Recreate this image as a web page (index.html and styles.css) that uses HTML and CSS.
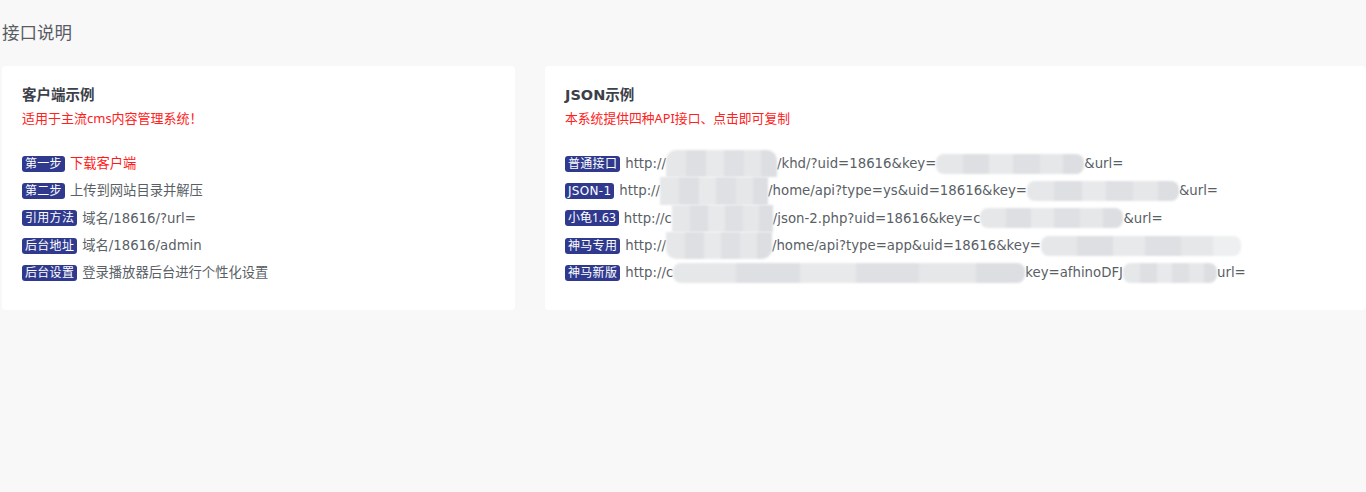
FILE: index.html
```html
<!DOCTYPE html>
<html lang="zh-CN">
<head>
<meta charset="utf-8">
<title>接口说明</title>
<link rel="stylesheet" href="styles.css">
</head>
<body>
<div class="page">
  <h1 class="page-title">接口说明</h1>
  <div class="cards">
    <div class="card">
      <h2 class="card-title">客户端示例</h2>
      <p class="card-sub">适用于主流cms内容管理系统！</p>
      <ul class="rows">
        <li><span class="badge">第一步</span><span class="red">下载客户端</span></li>
        <li><span class="badge">第二步</span>上传到网站目录并解压</li>
        <li><span class="badge">引用方法</span>域名/18616/?url=</li>
        <li><span class="badge">后台地址</span>域名/18616/admin</li>
        <li><span class="badge">后台设置</span>登录播放器后台进行个性化设置</li>
      </ul>
    </div>
    <div class="card">
      <h2 class="card-title">JSON示例</h2>
      <p class="card-sub card-sub-json">本系统提供四种API接口、点击即可复制</p>
      <ul class="rows">
        <li><span class="badge">普通接口</span>http://<span class="mask m-top" style="width:111px"></span>/khd/?uid=18616&amp;key=<span class="mask" style="width:148px"></span>&amp;url=</li>
        <li><span class="badge">JSON-1</span>http://<span class="mask m-mid" style="width:108px"></span>/home/api?type=ys&amp;uid=18616&amp;key=<span class="mask" style="width:152px"></span>&amp;url=</li>
        <li><span class="badge badge-narrow">小龟1.63</span>http://c<span class="mask m-mid" style="width:101px"></span>/json-2.php?uid=18616&amp;key=c<span class="mask" style="width:143px"></span>&amp;url=</li>
        <li><span class="badge">神马专用</span>http://<span class="mask m-bot" style="width:106px"></span>/home/api?type=app&amp;uid=18616&amp;key=<span class="mask m-fade" style="width:200px"></span></li>
        <li><span class="badge">神马新版</span>http://c<span class="mask" style="width:352px"></span>key=afhinoDFJ<span class="mask" style="width:94px"></span>url=</li>
      </ul>
    </div>
  </div>
</div>
</body>
</html>
```
FILE: styles.css
```css
html, body {
  margin: 0;
  padding: 0;
  background: #f8f8f9;
}
body {
  font-family: "DejaVu Sans", "Noto Sans CJK SC", sans-serif;
  color: #5a5f66;
}
.page {
  padding: 0 0 0 2px;
}
.page-title {
  margin: 0;
  padding-top: 20px;
  height: 66px;
  box-sizing: border-box;
  font-size: 17.5px;
  line-height: 24px;
  font-weight: 400;
  color: #595d63;
  font-family: "Noto Sans CJK SC", sans-serif;
}
.cards {
  display: grid;
  grid-template-columns: 513px 1fr;
  column-gap: 30px;
}
.card {
  background: #fff;
  border-radius: 4px;
  padding: 20px 20px 25px;
  height: 244px;
  box-sizing: border-box;
}
.card-title {
  margin: 0;
  font-size: 14.5px;
  line-height: 19px;
  font-weight: 700;
  color: #3b4049;
  font-family: "DejaVu Sans", "Noto Sans CJK SC", sans-serif;
}
.card-sub {
  margin: 4px 0 0;
  font-size: 13px;
  line-height: 18px;
  color: #ff2020;
  font-family: "Noto Sans", "Noto Sans CJK SC", sans-serif;
}
.card-sub-json {
  font-size: 12.8px;
}
.rows {
  list-style: none;
  margin: 23px 0 0;
  padding: 0;
}
.rows li {
  height: 27.3px;
  line-height: 27px;
  font-size: 13.3px;
  white-space: nowrap;
  display: flex;
  align-items: center;
}
.badge {
  display: inline-block;
  background: #2f3a8f;
  color: #fff;
  font-size: 12px;
  line-height: 16px;
  height: 16px;
  padding: 0 3px;
  border-radius: 3px;
  margin-right: 5px;
  letter-spacing: 0.3px;
}
.badge-narrow {
  font-family: "Noto Sans", "Noto Sans CJK SC", sans-serif;
  letter-spacing: 0;
}
.red {
  color: #ff1a1a;
}
.mask {
  display: inline-block;
  height: 20px;
  border-radius: 8px;
  background: linear-gradient(90deg, #e6e7e9 0 18%, #dddfe2 18% 36%, #e8e9eb 36% 52%, #dfe0e3 52% 70%, #e6e7e9 70% 86%, #dcdee1 86% 100%);
  filter: blur(1.3px);
}
.m-top, .m-mid, .m-bot {
  height: 27.3px;
  border-radius: 0;
}
.m-top {
  border-radius: 10px 10px 0 0;
}
.m-bot {
  border-radius: 0 0 10px 10px;
}
.m-fade {
  background: linear-gradient(90deg, #e6e7e9 0 18%, #dddfe2 18% 36%, #e8e9eb 36% 52%, #dfe0e3 52% 70%, #e6e7e9 70% 86%, #eeeff0 86% 100%);
}
```
